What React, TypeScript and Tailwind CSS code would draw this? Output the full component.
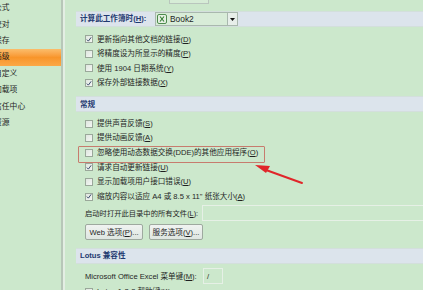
import React from "react";

const sideItems = ["公式", "校对", "保存", "高级", "自定义", "加载项", "信任中心", "资源"];

const Box = ({ checked }: { checked?: boolean }) => (
  <span className="w-[8px] h-[8px] border border-[#9aa89a] bg-gradient-to-br from-[#dfe6df] to-[#f4f7f4] flex items-center justify-center shrink-0">
    {checked && (
      <svg width="7" height="7" viewBox="0 0 7 7">
        <path d="M1 3.6 L2.8 5.4 L6 1" fill="none" stroke="#2d3f63" strokeWidth="1.1" />
      </svg>
    )}
  </span>
);

const Check = ({ checked, children }: { checked?: boolean; children: React.ReactNode }) => (
  <div className="h-[14.6px] flex items-center gap-[4px] pl-[20px] whitespace-nowrap">
    <Box checked={checked} />
    <span>{children}</span>
  </div>
);

const Band = ({ children }: { children: React.ReactNode }) => (
  <div className="ml-[11px] h-[16px] bg-[#dce4ec] border-y border-[#d3dfdc] flex items-center pl-[4px] font-bold text-[#1f3a70]">
    {children}
  </div>
);

export default function App() {
  return (
    <div
      className="relative w-[423px] h-[290px] overflow-hidden flex bg-[#cce8cc] text-[7.6px] leading-none text-[#1f1f1f]"
      style={{ fontFamily: '"Liberation Sans", "Noto Sans CJK SC", sans-serif' }}
    >
      {/* side nav */}
      <div className="w-[61px] shrink-0 flex flex-col">
        {sideItems.map((s, i) => (
          <div
            key={s}
            className={
              "h-[16.4px] flex items-center whitespace-nowrap text-[7.8px] " +
              (i === 3 ? "bg-gradient-to-b from-[#fbbd6a] via-[#f8952a] to-[#fba846]" : "")
            }
          >
            <span className="ml-[-6px]">{s}</span>
          </div>
        ))}
      </div>
      <div className="w-[2px] shrink-0 bg-[#b7c7b8]" />
      <div className="w-[2px] shrink-0 bg-[#e3eee3]" />

      {/* main */}
      <div className="flex-1 flex flex-col">
        <div className="h-[11px] shrink-0 relative">
          <div className="absolute left-[104px] top-[-8px] w-[40px] h-[12px] border border-[#b9c6bd] bg-[#d6ecd6]" />
        </div>

        <div className="ml-[11px] h-[16px] shrink-0 bg-[#dce4ec] border-y border-[#d3dfdc] flex items-center pl-[4px]">
          <span className="font-bold text-[#1f3a70] w-[75px] whitespace-nowrap">
            计算此工作簿时(<u>H</u>):
          </span>
          <div className="flex items-center h-[14px] w-[83px] border border-[#a9b8ae] bg-[#d8ecd8]">
            <svg width="10" height="10" viewBox="0 0 10 10" className="ml-[1px]">
              <rect x="0.5" y="0.5" width="9" height="9" rx="1.5" fill="#e6f0e4" stroke="#4d8a4d" />
              <path d="M3 2.5 L7 7.5 M7 2.5 L3 7.5" stroke="#2f7a2f" strokeWidth="1.1" />
            </svg>
            <span className="ml-[3px] flex-1 text-[8.4px]">Book2</span>
            <div className="w-[10px] h-full border-l border-[#a9b8ae] bg-[#e7eeea] flex items-center justify-center">
              <svg width="5" height="3" viewBox="0 0 5 3">
                <path d="M0 0 H5 L2.5 3 Z" fill="#111" />
              </svg>
            </div>
          </div>
        </div>

        <div className="mt-[5px] shrink-0">
          <Check checked>更新指向其他文档的链接(<u>D</u>)</Check>
          <Check>将精度设为所显示的精度(<u>P</u>)</Check>
          <Check>使用 1904 日期系统(<u>Y</u>)</Check>
          <Check checked>保存外部链接数据(<u>X</u>)</Check>
        </div>

        <div className="mt-[6px] shrink-0">
          <Band>常规</Band>
        </div>

        <div className="mt-[4px] shrink-0">
          <Check>提供声音反馈(<u>S</u>)</Check>
          <Check>提供动画反馈(<u>A</u>)</Check>
          <Check>忽略使用动态数据交换(DDE)的其他应用程序(<u>O</u>)</Check>
          <Check checked>请求自动更新链接(<u>U</u>)</Check>
          <Check>显示加载项用户接口错误(<u>U</u>)</Check>
          <Check checked>缩放内容以适应 A4 或 8.5 x 11" 纸张大小(<u>A</u>)</Check>
        </div>

        <div className="mt-[1px] h-[17px] shrink-0 flex items-center pl-[20px] whitespace-nowrap">
          <span className="w-[117px] text-[7.3px]">启动时打开此目录中的所有文件(<u>L</u>):</span>
          <div className="flex-1 h-[16px] border border-[#e6f0e6] border-r-0" />
        </div>

        <div className="mt-[2px] h-[17px] shrink-0 flex items-center gap-[6px] pl-[20px]">
          <button className="h-[16px] w-[58px] rounded-[2px] border border-[#9ea99f] bg-gradient-to-b from-[#f0f3f1] to-[#dfe6e1] whitespace-nowrap">
            Web 选项(<u>P</u>)...
          </button>
          <button className="h-[16px] w-[54px] rounded-[2px] border border-[#9ea99f] bg-gradient-to-b from-[#f0f3f1] to-[#dfe6e1] whitespace-nowrap">
            服务选项(<u>V</u>)...
          </button>
        </div>

        <div className="mt-[7px] shrink-0">
          <Band>Lotus&nbsp;兼容性</Band>
        </div>

        <div className="mt-[4px] h-[17px] shrink-0 flex items-center pl-[20px] whitespace-nowrap">
          <span className="w-[118px]">
            Microsoft Office Excel 菜单键(<u>M</u>):
          </span>
          <div className="w-[20px] h-[16px] border border-[#e6f0e6] flex items-center pl-[3px]">/</div>
        </div>

        <div className="shrink-0">
          <Check>Lotus 1-2-3 帮助键(<u>K</u>)</Check>
        </div>
      </div>

      {/* annotation */}
      <div className="absolute left-[78px] top-[146px] w-[187px] h-[17px] border-[1.5px] border-[#c77c6e] rounded-[1px]" />
      <svg className="absolute left-0 top-0" width="423" height="290" viewBox="0 0 423 290">
        <path d="M302 183 L266 170" stroke="#e0262a" strokeWidth="2" strokeLinecap="round" />
        <path d="M255 165 L270 166 L266 173 Z" fill="#e0262a" />
      </svg>
    </div>
  );
}
